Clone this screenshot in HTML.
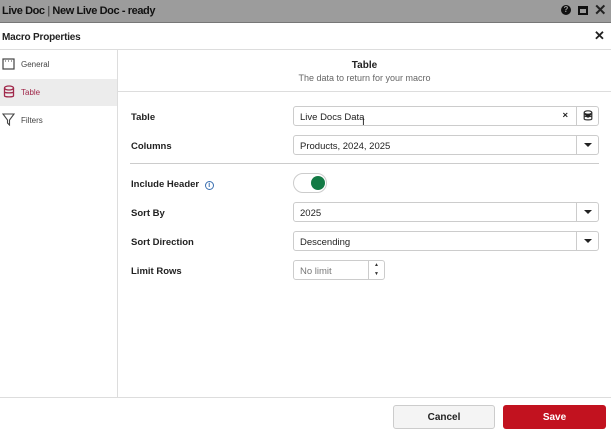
<html><head><style>
*{box-sizing:border-box;margin:0;padding:0}
body{width:611px;height:434px;overflow:hidden;background:#fff;font-family:"Liberation Sans",sans-serif;font-size:10px;color:#222;position:relative}
.abs{position:absolute}
.tb{left:0;top:0;width:611px;height:23px;background:#9c9c9c;border-bottom:1px solid #777}
.lbl{font-weight:bold;font-size:9.5px;color:#222}
.inp{position:absolute;left:293px;width:306px;height:20px;border:1px solid #ccc;border-radius:3px;background:#fff;font-size:9.5px;padding:5px 6px 0}
.dd{position:absolute;right:0;top:0;width:22px;height:18px;border-left:1px solid #ccc}
.dd:after{content:"";position:absolute;left:7px;top:7px;border-left:4px solid transparent;border-right:4px solid transparent;border-top:4px solid #222}
</style></head><body>
<div class="abs tb"></div>
<div class="abs" style="left:2px;top:5px;font-size:11px;letter-spacing:-0.4px;font-weight:bold;color:#111">Live Doc <span style="font-weight:normal;color:#333">|</span> New Live Doc - ready</div>
<div class="abs" style="left:561px;top:5px;width:10px;height:10px;border-radius:50%;background:#111;color:#9c9c9c;font-size:8px;font-weight:bold;text-align:center;line-height:10px">?</div>
<div class="abs" style="left:578px;top:6px;width:10px;height:9px;border:2px solid #111;border-top-width:3px"></div>
<div class="abs" style="left:594px;top:1px;font-size:15px;font-weight:bold">✕</div>
<div class="abs" style="left:2px;top:32px;font-size:10px;letter-spacing:-0.2px;font-weight:bold">Macro Properties</div>
<div class="abs" style="left:594px;top:28px;font-size:13px;font-weight:bold">✕</div>
<div class="abs" style="left:0;top:49px;width:611px;height:1px;background:#ddd"></div>
<div class="abs" style="left:117px;top:50px;width:1px;height:348px;background:#ddd"></div>
<div class="abs" style="left:0;top:79px;width:117px;height:27px;background:#ececec"></div>
<svg class="abs" style="left:2px;top:58px" width="13" height="13"><rect x="1" y="1" width="11" height="10" fill="none" stroke="#444" stroke-width="1.2"/><path d="M3 3h1M6 3h1M9 3h1" stroke="#444"/></svg>
<div class="abs" style="left:21px;top:60px;font-size:8px;color:#444">General</div>
<svg class="abs" style="left:3px;top:85px" width="12" height="14"><g fill="none" stroke="#a0284a" stroke-width="1.3"><ellipse cx="6" cy="3" rx="4.5" ry="2"/><path d="M1.5 3v8c0 1.2 9 1.2 9 0V3M1.5 7c0 1.2 9 1.2 9 0"/></g></svg>
<div class="abs" style="left:21px;top:88px;font-size:8px;color:#a0284a">Table</div>
<svg class="abs" style="left:2px;top:113px" width="13" height="13"><path d="M1 1h11L7.5 7v5L5.5 10V7z" fill="none" stroke="#444" stroke-width="1.1"/></svg>
<div class="abs" style="left:21px;top:116px;font-size:8px;color:#444">Filters</div>
<div class="abs" style="left:118px;top:60px;width:493px;text-align:center;font-weight:bold;font-size:10px">Table</div>
<div class="abs" style="left:118px;top:73px;width:493px;text-align:center;font-size:9px;color:#666">The data to return for your macro</div>
<div class="abs" style="left:118px;top:91px;width:493px;height:1px;background:#ddd"></div>
<div class="abs lbl" style="left:131px;top:112px">Table</div>
<div class="inp" style="top:106px">Live Docs Data<span style="position:absolute;right:30px;top:3px;font-weight:bold">×</span><div class="dd"><svg style="position:absolute;left:6px;top:3px" width="10" height="12"><g fill="none" stroke="#333" stroke-width="1.2"><ellipse cx="5" cy="2.5" rx="3.8" ry="1.7"/><path d="M1.2 2.5v6.5c0 1.2 7.6 1.2 7.6 0V2.5M1.2 5.8c0 1.2 7.6 1.2 7.6 0"/></g></svg></div></div>
<div class="abs" style="left:362px;top:117px;font-size:10px">I</div>
<div class="abs lbl" style="left:131px;top:141px">Columns</div>
<div class="inp" style="top:135px">Products, 2024, 2025<div class="dd"></div></div>
<div class="abs" style="left:130px;top:163px;width:469px;height:1px;background:#ccc"></div>
<div class="abs lbl" style="left:131px;top:179px">Include Header <span style="display:inline-block;width:9px;height:9px;border:1px solid #3a6fb0;border-radius:50%;color:#3a6fb0;font-size:7px;text-align:center;line-height:8px;margin-left:3px">i</span></div>
<div class="abs" style="left:293px;top:173px;width:34px;height:20px;border:1px solid #ccc;border-radius:10px;background:#fff"></div>
<div class="abs" style="left:311px;top:176px;width:14px;height:14px;border-radius:50%;background:#137a45"></div>
<div class="abs lbl" style="left:131px;top:208px">Sort By</div>
<div class="inp" style="top:202px">2025<div class="dd"></div></div>
<div class="abs lbl" style="left:131px;top:237px">Sort Direction</div>
<div class="inp" style="top:231px">Descending<div class="dd"></div></div>
<div class="abs lbl" style="left:131px;top:266px">Limit Rows</div>
<div class="inp" style="top:260px;width:92px;color:#777">No limit<div style="position:absolute;right:0;top:0;width:16px;height:18px;border-left:1px solid #ccc"><span style="position:absolute;left:5px;top:1px;font-size:5px;color:#333">▲</span><span style="position:absolute;left:5px;top:10px;font-size:5px;color:#333">▼</span></div></div>
<div class="abs" style="left:0;top:397px;width:611px;height:1px;background:#ddd"></div>
<div class="abs" style="left:393px;top:405px;width:102px;height:24px;border:1px solid #ccc;border-radius:3px;background:#f4f4f4;text-align:center;line-height:23px;font-weight:bold;font-size:10px">Cancel</div>
<div class="abs" style="left:503px;top:405px;width:103px;height:24px;border-radius:3px;background:#c2121f;color:#fff;text-align:center;line-height:25px;font-weight:bold;font-size:10px">Save</div>
</body></html>
